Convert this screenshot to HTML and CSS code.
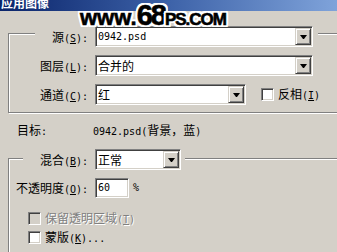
FILE: index.html
```html
<!DOCTYPE html>
<html>
<head>
<meta charset="utf-8">
<link rel="stylesheet" href="styles.css">
</head>
<body>
<div class="titlebar"><span class="title">应用图像</span></div>
<div class="watermark"><span class="w1">www.</span><span class="w2">68</span><span class="w3">PS.COM</span></div>

<div class="group g1">
  <div class="row legend l1">
    <label class="lbl">源<span class="a">(<u>S</u>):</span></label>
    <div class="combo wide"><span class="val a">0942.psd</span><span class="btn"><i class="arrow"></i></span></div>
  </div>
  <div class="row">
    <label class="lbl">图层<span class="a">(<u>L</u>):</span></label>
    <div class="combo wide"><span class="val">合并的</span><span class="btn"><i class="arrow"></i></span></div>
  </div>
  <div class="row">
    <label class="lbl">通道<span class="a">(<u>C</u>):</span></label>
    <div class="combo mid"><span class="val">红</span><span class="btn"><i class="arrow"></i></span></div>
    <div class="check invert"><i class="box"></i><span class="ctext">反相<span class="a">(<u>I</u>)</span></span></div>
  </div>
</div>

<div class="target"><span class="tlabel">目标<span class="a">:</span></span><span><span class="a">0942.psd(</span>背景，蓝<span class="a">)</span></span></div>

<div class="group g2">
  <div class="row legend l2">
    <label class="lbl">混合<span class="a">(<u>B</u>):</span></label>
    <div class="combo small"><span class="val">正常</span><span class="btn"><i class="arrow"></i></span></div>
  </div>
  <div class="row">
    <label class="lbl">不透明度<span class="a">(<u>O</u>):</span></label>
    <div class="field"><span class="a">60</span></div>
    <span class="a pct">%</span>
  </div>
  <div class="check opt disabled"><i class="box"></i><span class="ctext">保留透明区域<span class="a">(<u>T</u>)</span></span></div>
  <div class="check opt"><i class="box"></i><span class="ctext">蒙版<span class="a">(<u>K</u>)...</span></span></div>
</div>
</body>
</html>
```

FILE: styles.css
```css
html, body {
  margin: 0;
  padding: 0;
  overflow: hidden;
}

body {
  position: relative;
  width: 337px;
  height: 252px;
  background: #d4d0c8;
  color: #000;
  font: 12px "Noto Sans CJK SC", sans-serif;
}

.a {
  font-family: "DejaVu Sans Mono", monospace;
  font-size: 10px;
  line-height: 1;
}

.titlebar {
  height: 11px;
  overflow: hidden;
  background: linear-gradient(to right, #0a246a, #3d62a8 50%, #7fa3da);
}

.title {
  display: block;
  margin-top: -3px;
  padding-left: 1px;
  color: #fff;
  font-weight: bold;
  line-height: 12px;
}

.watermark {
  position: absolute;
  left: 80px;
  top: 1px;
  z-index: 2;
  display: flex;
  align-items: baseline;
  font-family: "Liberation Sans", sans-serif;
  font-weight: bold;
  line-height: 28px;
  color: #000;
  -webkit-text-stroke: 0.6px #000;
  text-shadow:
    2px 0 #fff, -2px 0 #fff, 0 2px #fff, 0 -2px #fff,
    2px 2px #fff, -2px -2px #fff, 2px -2px #fff, -2px 2px #fff,
    1px 2px #fff, 2px 1px #fff, -1px 2px #fff, -2px 1px #fff,
    1px -2px #fff, 2px -1px #fff, -1px -2px #fff, -2px -1px #fff;
}

.w1 { font-size: 22px; }
.w2 { font-size: 29px; letter-spacing: -2px; }
.w3 { font-size: 17px; letter-spacing: -1px; }

.group {
  margin-left: 8px;
  margin-right: -20px;
  border: 1px solid #808080;
  box-shadow: inset 1px 1px 0 #fff, 1px 1px 0 #fff;
}

.g1 {
  margin-top: 22px;
  padding-bottom: 7px;
}

.g2 {
  margin-top: 21px;
  height: 120px;
}

.row {
  display: flex;
  align-items: center;
  gap: 7px;
}

.row + .row {
  margin-top: 8px;
}

.legend {
  width: max-content;
  background: #d4d0c8;
}

.l1 {
  margin-top: -8px;
  margin-left: 26px;
  padding-right: 5px;
}

.l2 {
  margin-top: -10px;
  margin-left: 14px;
  padding-right: 4px;
}

.lbl {
  flex: none;
  width: 79px;
  text-align: right;
  line-height: 14px;
  white-space: nowrap;
}

.l1 .lbl { width: 53px; }
.l2 .lbl { width: 65px; }

.combo,
.field,
.box {
  box-sizing: border-box;
  border: 1px solid;
  border-color: #808080 #fff #fff #808080;
  box-shadow: inset 1px 1px 0 #404040, inset -1px -1px 0 #d4d0c8;
  background: #fff;
}

.combo {
  display: flex;
  align-items: center;
  height: 21px;
  padding: 1px;
}

.wide { width: 218px; }
.mid { width: 151px; }
.small { width: 86px; }

.val {
  flex: 1;
  padding-left: 1px;
  line-height: 14px;
  white-space: nowrap;
}

.btn {
  display: flex;
  align-items: center;
  justify-content: center;
  align-self: stretch;
  box-sizing: border-box;
  width: 16px;
  border: 1px solid;
  border-color: #d4d0c8 #404040 #404040 #d4d0c8;
  box-shadow: inset 1px 1px 0 #fff, inset -1px -1px 0 #808080;
  background: #d4d0c8;
}

.arrow {
  width: 1px;
  height: 0;
  border-left: 3px solid transparent;
  border-right: 3px solid transparent;
  border-top: 4px solid #000;
}

.check {
  display: flex;
  align-items: flex-start;
  gap: 4px;
  height: 13px;
  white-space: nowrap;
}

.ctext {
  line-height: 11px;
}

.box {
  display: block;
  flex: none;
  width: 13px;
  height: 13px;
}

.invert {
  margin-left: 8px;
}

.target {
  display: flex;
  margin: 10px 0 0 17px;
  line-height: 14px;
}

.tlabel {
  width: 76px;
}

.field {
  display: flex;
  align-items: center;
  width: 34px;
  height: 20px;
  padding-left: 2px;
}

.pct {
  margin-left: -3px;
}

.opt {
  margin-left: 19px;
}

.row + .opt {
  margin-top: 14px;
}

.opt + .opt {
  margin-top: 6px;
}

.disabled {
  color: #808080;
  text-shadow: 1px 1px 0 #fff;
}

.disabled .box {
  background: #d4d0c8;
}
```
